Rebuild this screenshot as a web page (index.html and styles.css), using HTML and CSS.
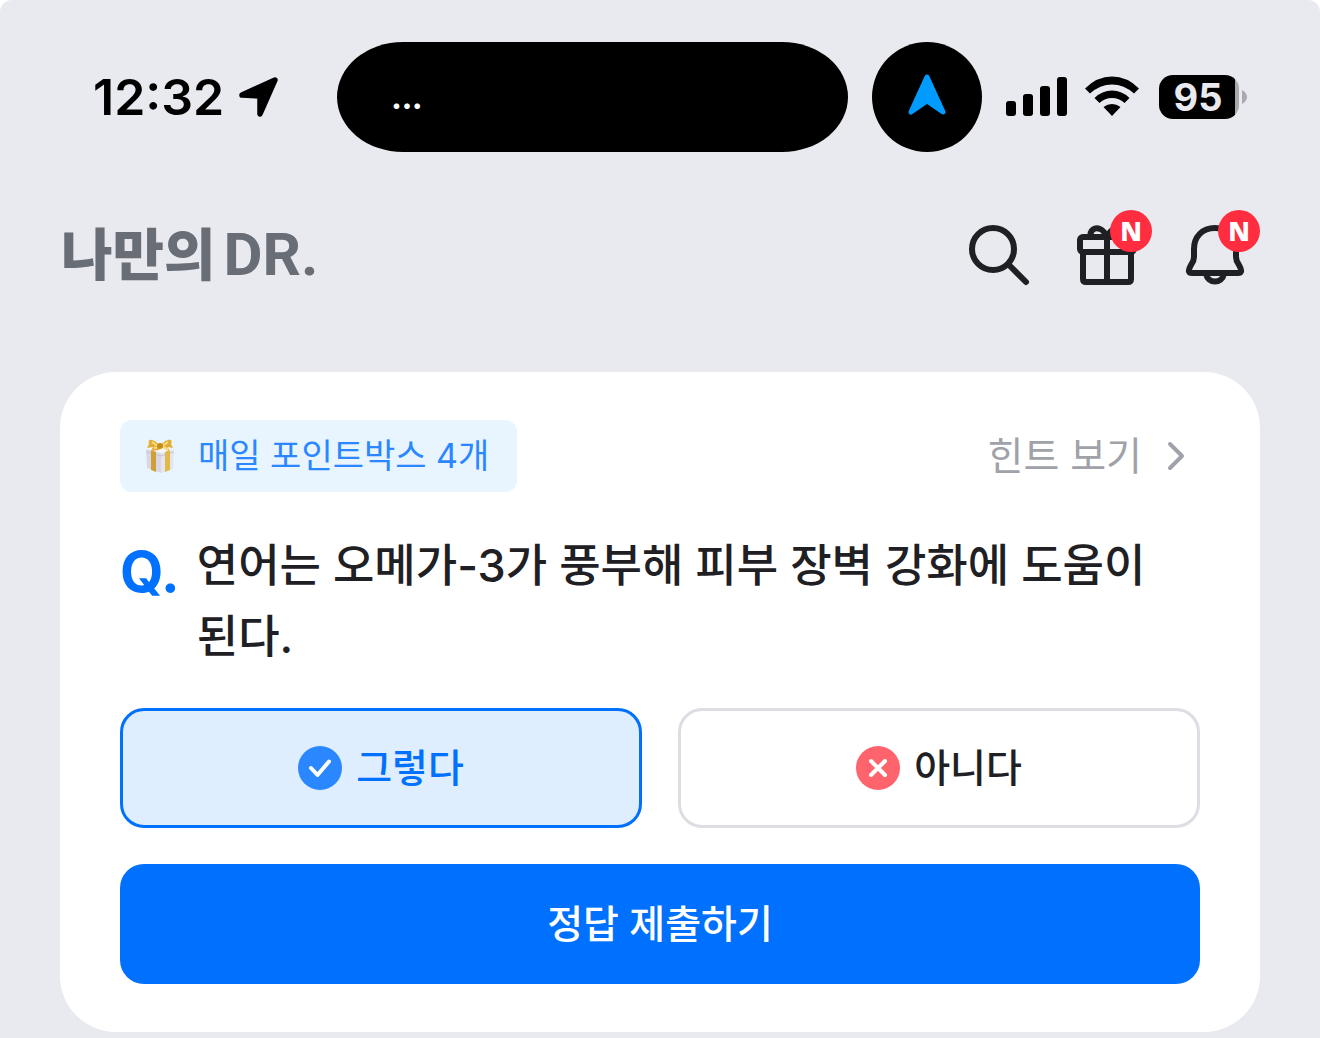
FILE: index.html
```html
<!DOCTYPE html>
<html lang="ko">
<head>
  <meta charset="UTF-8">
  <meta name="viewport" content="width=device-width, initial-scale=1.0">
  <title>나만의 DR.</title>
  <link rel="stylesheet" href="styles.css">
</head>
<body>
  <div class="screen">
    <!-- Status bar -->
    <div class="status-bar">
      <span class="status-time">12:32</span>
      <svg class="status-location" width="40" height="40" viewBox="0 0 40 40" aria-hidden="true">
        <path d="M3 18 L36 3 L21 37 V19 Z" stroke="#000" stroke-width="5.500" stroke-linejoin="round"/>
      </svg>
      <div class="island"><span>...</span></div>
      <div class="island-dot">
        <svg width="40" height="44" viewBox="0 0 40 44" aria-hidden="true">
          <path d="M20 4 L36 39 L20 28 L4 39 Z" fill="#009bff" stroke="#009bff" stroke-width="5" stroke-linejoin="round"/>
        </svg>
      </div>
      <svg class="status-signal" width="62" height="40" viewBox="0 0 62 40" aria-hidden="true">
        <rect x="0" y="24" width="10" height="15" rx="3"/>
        <rect x="17" y="17" width="10" height="22" rx="3"/>
        <rect x="34" y="9" width="10" height="30" rx="3"/>
        <rect x="51" y="0" width="10" height="39" rx="3"/>
      </svg>
      <svg class="status-wifi" width="54" height="42" viewBox="0 0 54 42" aria-hidden="true">
        <path d="M0 12.500 Q12 0.500 27 0.500 Q42 0.500 54 12.500 L49 17.500 Q39 8.500 27 8.500 Q15 8.500 5 17.500 Z"/>
        <path d="M9.500 22 Q17 14.500 27 14.500 Q37 14.500 44.500 22 L39.500 27 Q34 22 27 22 Q20 22 14.500 27 Z"/>
        <path d="M18.500 31 Q22.500 28 27 28 Q31.500 28 35.500 31 L27 40 Z"/>
      </svg>
      <div class="battery">
        <span class="battery-level">95</span>
        <svg width="6" height="16" viewBox="0 0 6 16" aria-hidden="true"><path d="M1 1 Q6 4 6 8 Q6 12 1 15 Z" fill="#a9a9ae"/></svg>
      </div>
    </div>

    <!-- App header -->
    <header class="header">
      <a class="logo" href="#"><span>나만의</span><span class="logo-dr">DR.</span></a>
      <nav class="header-actions">
        <button class="icon-button" type="button" aria-label="검색">
          <svg width="72" height="72" viewBox="0 0 72 72" aria-hidden="true">
            <circle cx="30" cy="30" r="21"/>
            <path d="M46 46 L63 63"/>
          </svg>
        </button>
        <button class="icon-button" type="button" aria-label="선물">
          <svg width="72" height="72" viewBox="0 0 72 72" aria-hidden="true">
            <path d="M12 33 V60 Q12 63 15 63 H57 Q60 63 60 60 V33"/>
            <rect x="9" y="18" width="54" height="15" rx="3"/>
            <path d="M36 18 V63"/>
            <path d="M20 18 C18 11 24 8 29 10 C32 11 34 14 36 17 C38 14 40 11 43 10 C48 8 54 11 52 18"/>
          </svg>
          <span class="badge">N</span>
        </button>
        <button class="icon-button" type="button" aria-label="알림">
          <svg width="72" height="72" viewBox="0 0 72 72" aria-hidden="true">
            <path d="M36 9 C23 9 15 18 15 30 V38 Q15 42 12 46 L11 48 Q8 54 13 54 H59 Q64 54 61 48 L60 46 Q57 42 57 38 V30 C57 18 49 9 36 9 Z"/>
            <path d="M27 55 C29 65 43 65 45 55"/>
          </svg>
          <span class="badge">N</span>
        </button>
      </nav>
    </header>

    <!-- Daily quiz -->
    <main>
      <form class="quiz-card">
        <div class="quiz-top">
          <div class="point-tag">
            <svg width="32" height="36" viewBox="0 0 32 36" aria-hidden="true">
              <path d="M2 11 L17 15 V35 L3 30 Z" fill="#d9d7e6"/>
              <path d="M30 11 L17 15 V35 L29 31 Z" fill="#e6e4f0"/>
              <path d="M2 11 L16 8 L30 11 L17 15 Z" fill="#f6f5fa"/>
              <path d="M2 14 L17 18 L30 14" fill="none" stroke="#c5c2d6"/>
              <path d="M7 12 L12 14 V34 L7 32 Z" fill="#cfa034"/>
              <path d="M21 14 L26 12 V32 L21 34 Z" fill="#dfba45"/>
              <path d="M16 8 C10 0 3 0 5 6 L3 10 L9 9 L7 13 L15 12 L17 9 L25 13 L24 9 L29 10 L27 6 C30 0 22 0 16 8 Z" fill="#e3ad35"/>
              <path d="M8 4 L14 8 M24 4 L18 8 M10 10 L14 9 M19 9 L24 11" stroke="#fbdf7e" stroke-width="2"/>
              <circle cx="16" cy="8" r="3" fill="#c98b1c"/>
            </svg>
            <span>매일 포인트박스 4개</span>
          </div>
          <a class="hint-link" href="#">
            <span>힌트 보기</span>
            <svg width="36" height="36" viewBox="0 0 36 36" aria-hidden="true"><path d="M12 6 L24 18 L12 30"/></svg>
          </a>
        </div>

        <div class="question">
          <span class="question-mark">Q.</span>
          <p class="question-text" id="question">연어는 오메가-3가 풍부해 피부 장벽 강화에 도움이 된다.</p>
        </div>

        <div class="options" role="radiogroup" aria-labelledby="question">
          <label class="option">
            <input type="radio" name="answer" value="yes" checked>
            <svg width="44" height="44" viewBox="0 0 44 44" aria-hidden="true">
              <circle cx="22" cy="22" r="22" fill="#2b87ff"/>
              <path d="M13 22 L19.500 29 L31 15.500"/>
            </svg>
            <span>그렇다</span>
          </label>
          <label class="option">
            <input type="radio" name="answer" value="no">
            <svg width="44" height="44" viewBox="0 0 44 44" aria-hidden="true">
              <circle cx="22" cy="22" r="22" fill="#ff646c"/>
              <path d="M15 15 L29 29 M29 15 L15 29"/>
            </svg>
            <span>아니다</span>
          </label>
        </div>

        <button class="submit-button" type="submit">정답 제출하기</button>
      </form>
    </main>
  </div>
</body>
</html>
```
FILE: styles.css
```css
* {
  box-sizing: border-box;
}

body {
  margin: 0;
  background: #fff;
  color: #1f2024;
  font-family: Inter, "Noto Sans CJK KR", sans-serif;
}

a {
  color: inherit;
  text-decoration: none;
}

button {
  font-family: inherit;
  border: none;
  cursor: pointer;
}

svg {
  display: block;
  flex-shrink: 0;
}

.screen {
  min-height: 100vh;
  padding-bottom: 6px;
  background: #e9eaef;
  border-radius: 12px 12px 0 0;
}

/* Status bar */
.status-bar {
  display: flex;
  align-items: center;
  padding: 42px 73px 0 93px;
  color: #000;
}

.status-time {
  font-size: 50px;
  font-weight: 600;
  line-height: 60px;
}

.status-location {
  margin-left: 15px;
}

.island {
  display: flex;
  flex: 1;
  align-items: center;
  height: 110px;
  margin: 0 24px 0 58px;
  padding: 4px 0 0 54px;
  background: #000;
  border-radius: 66px / 55px;
  color: #fff;
  font-size: 28px;
  font-weight: 900;
}

.island-dot {
  display: flex;
  align-items: center;
  justify-content: center;
  width: 110px;
  height: 110px;
  padding-bottom: 4px;
  background: #000;
  border-radius: 50%;
}

.status-signal {
  margin-left: 24px;
}

.status-wifi {
  margin-left: 17px;
}

.battery {
  display: flex;
  align-items: center;
  gap: 2px;
  margin-left: 20px;
}

.battery-level {
  width: 80px;
  padding-right: 2px;
  background: linear-gradient(to right, #000 76px, #a9a9ae 76px);
  border-radius: 14px;
  color: #e9eaef;
  font-size: 38px;
  font-weight: 700;
  line-height: 44px;
  text-align: center;
}

/* Header */
.header {
  display: flex;
  align-items: center;
  justify-content: space-between;
  padding: 67px 69px 81px 61px;
}

.logo {
  display: flex;
  align-items: center;
  gap: 8px;
  color: #686d76;
  font-size: 56px;
  font-weight: 900;
  line-height: 72px;
}

.logo-dr {
  font-family: Roboto, sans-serif;
  font-size: 60px;
  font-weight: 700;
}

.header-actions {
  display: flex;
  gap: 36px;
}

.icon-button {
  position: relative;
  padding: 0;
  background: none;
}

.icon-button svg {
  fill: none;
  stroke: #1f2024;
  stroke-width: 6;
  stroke-linecap: round;
  stroke-linejoin: round;
}

.badge {
  position: absolute;
  top: -9px;
  left: 39px;
  width: 42px;
  height: 42px;
  background: #ff2d3f;
  border-radius: 50%;
  color: #fff;
  font-family: "Open Sans", sans-serif;
  font-size: 26px;
  font-weight: 800;
  line-height: 42px;
  text-align: center;
}

/* Quiz card */
.quiz-card {
  display: flex;
  flex-direction: column;
  gap: 36px;
  margin: 0 60px;
  padding: 48px 60px;
  background: #fff;
  border-radius: 56px;
}

.quiz-top {
  display: flex;
  align-items: center;
  justify-content: space-between;
}

.point-tag {
  display: flex;
  align-items: center;
  gap: 22px;
  padding: 0 28px 0 24px;
  background: #e8f5ff;
  border-radius: 12px;
  color: #2b87ff;
  font-size: 34px;
  line-height: 72px;
}

.hint-link {
  display: flex;
  align-items: center;
  gap: 16px;
  padding-right: 6px;
  color: #9fa2a9;
  font-size: 39px;
  line-height: 72px;
}

.hint-link svg {
  fill: none;
  stroke: #9fa2a9;
  stroke-width: 4;
  stroke-linecap: round;
  stroke-linejoin: round;
}

.question {
  display: flex;
  gap: 17px;
  padding-top: 2px;
}

.question-mark {
  color: #0070ff;
  font-size: 56px;
  font-weight: 700;
  line-height: 84px;
}

.question-text {
  margin: 0;
  font-size: 45px;
  font-weight: 500;
  line-height: 71px;
  word-break: keep-all;
}

.options {
  display: flex;
  gap: 36px;
}

.option {
  display: flex;
  flex: 1;
  align-items: center;
  justify-content: center;
  gap: 14px;
  height: 120px;
  border: 3px solid #dddee3;
  border-radius: 24px;
  font-size: 39px;
  font-weight: 500;
  line-height: 72px;
  cursor: pointer;
}

.option input {
  appearance: none;
  position: absolute;
  margin: 0;
}

.option svg {
  fill: none;
  stroke: #fff;
  stroke-width: 4;
  stroke-linecap: round;
  stroke-linejoin: round;
}

.option circle {
  stroke: none;
}

.option:has(input:checked) {
  background: #deeeff;
  border-color: #0070ff;
  color: #0070ff;
}

.submit-button {
  height: 120px;
  background: #0070ff;
  border-radius: 24px;
  color: #fff;
  font-size: 39px;
  font-weight: 500;
  line-height: 72px;
}
```
